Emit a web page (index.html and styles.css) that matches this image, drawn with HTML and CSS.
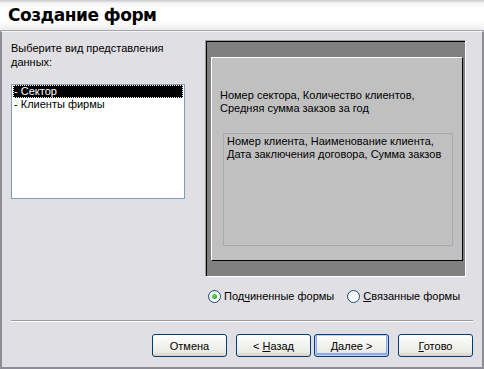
FILE: index.html
```html
<!DOCTYPE html>
<html lang="ru">
<head>
  <meta charset="UTF-8">
  <title>Создание форм</title>
  <link rel="stylesheet" href="styles.css">
</head>
<body>

  <div class="okno">
    <!-- Заголовок мастера -->
    <div class="shapka">
      <h1>Создание форм</h1>
    </div>

    <div class="telo">
      <div class="osnova">
        <!-- Левая колонка: выбор вида -->
        <div class="levo">
          <div class="podpis">Выберите вид представления данных:</div>
          <div class="spisok">
            <div class="punkt vybran">- Сектор</div>
            <div class="punkt">- Клиенты фирмы</div>
          </div>
        </div>

        <!-- Правая колонка: образец формы -->
        <div class="pravo">
          <div class="ramka">
            <div class="obrazec">
              <div class="glavnaya">Номер сектора, Количество клиентов,<br>Средняя сумма закзов за год</div>
              <div class="podforma">Номер клиента, Наименование клиента,<br>Дата заключения договора, Сумма закзов</div>
            </div>
          </div>

          <div class="vybor">
            <label class="radio"><span class="krug otmechen"></span><span>Под<u>ч</u>иненные формы</span></label>
            <label class="radio"><span class="krug"></span><span><u>С</u>вязанные формы</span></label>
          </div>
        </div>
      </div>

      <div class="liniya"></div>

      <div class="knopki">
        <button class="knopka">Отмена</button>
        <div class="para">
          <button class="knopka">&lt; <u>Н</u>азад</button>
          <button class="knopka glavnaya-knopka"><u>Д</u>алее &gt;</button>
        </div>
        <button class="knopka"><u>Г</u>отово</button>
      </div>
    </div>
  </div>

</body>
</html>
```

FILE: styles.css
```css
body {
  margin: 0;
  background-color: #e0dfe3;
}

.okno {
  width: 484px;
  height: 369px;
  display: flex;
  flex-direction: column;
  font-family: 'Liberation Sans', Arial, sans-serif;
  font-size: 11px;
  color: #000;
  background-color: #e0dfe3;
}

.shapka {
  height: 31px;
  box-sizing: border-box;
  padding-left: 8px;
  background: linear-gradient(to bottom, #c8c8cc 0, #f4f4f6 3px, #fff 8px, #fff 22px, #ececee 100%);
  border-bottom: 1px solid #a3a2a8;
  display: flex;
  align-items: center;
}

.shapka h1 {
  margin: 0;
  font-family: 'DejaVu Sans', Verdana, sans-serif;
  font-size: 17px;
  font-weight: bold;
  letter-spacing: -0.5px;
}

.telo {
  flex: 1;
  border-top: 1px solid #f4f4f6;
  border-left: 2px solid #8e8d96;
  border-right: 2px solid #8e8d96;
  border-bottom: 2px solid #8e8d96;
  padding: 8px 9px 0 9px;
  display: flex;
  flex-direction: column;
}

.osnova {
  display: flex;
  gap: 20px;
}

.levo {
  width: 174px;
}

.podpis {
  margin-top: 1px;
  line-height: 14px;
}

.spisok {
  margin-top: 15px;
  height: 115px;
  box-sizing: border-box;
  border: 1px solid #7f9db9;
  background-color: #fff;
  padding: 0 1px;
}

.punkt {
  height: 13px;
  line-height: 13px;
  padding-left: 1px;
  white-space: nowrap;
}

.punkt.vybran {
  background-color: #000;
  color: #fff;
  outline: 1px dotted #fff;
  outline-offset: -1px;
}

.ramka {
  width: 261px;
  height: 237px;
  box-sizing: border-box;
  border-style: solid;
  border-width: 1px;
  border-color: #a0a0a0 #fff #fff #a0a0a0;
  background-color: #808080;
  box-shadow: inset 1px 1px 0 #000;
  padding: 16px 2px 15px 5px;
}

.obrazec {
  height: 204px;
  box-sizing: border-box;
  border-style: solid;
  border-width: 1px;
  border-color: #fff #000 #000 #fff;
  background-color: #c0c0c0;
  padding: 31px 0 0 8px;
}

.glavnaya {
  line-height: 13px;
}

.podforma {
  margin: 18px 0 0 3px;
  width: 230px;
  height: 113px;
  box-sizing: border-box;
  border: 1px solid #a3acb3;
  padding: 1px 3px;
  line-height: 13px;
}

.vybor {
  display: flex;
  gap: 13px;
  margin: 13px 0 0 3px;
}

.radio {
  display: flex;
  align-items: center;
  gap: 3px;
  line-height: 13px;
}

.krug {
  width: 13px;
  height: 13px;
  box-sizing: border-box;
  border: 1px solid #1c5180;
  border-radius: 50%;
  background: radial-gradient(circle at 60% 60%, #fff 30%, #dcdcd6 100%);
  position: relative;
}

.krug.otmechen::after {
  content: "";
  position: absolute;
  left: 3px;
  top: 3px;
  width: 5px;
  height: 5px;
  border-radius: 50%;
  background: radial-gradient(circle at 35% 35%, #5ee05e, #1e9e1e);
}

.liniya {
  margin-top: 17px;
  height: 1px;
  background-color: #9d9da1;
  border-bottom: 1px solid #fff;
}

.knopki {
  display: flex;
  justify-content: flex-end;
  gap: 9px;
  margin-top: 12px;
}

.para {
  display: flex;
  gap: 3px;
}

.knopka {
  width: 75px;
  height: 23px;
  padding: 0;
  font-family: 'Liberation Sans', Arial, sans-serif;
  font-size: 11px;
  color: #000;
  border: 1px solid #003c74;
  border-radius: 3px;
  background: linear-gradient(to bottom, #fff 0, #f4f4f0 40%, #ecebe6 80%, #d6d0c5 100%);
}

.glavnaya-knopka {
  box-shadow: inset 0 0 0 1px #c1d3fb, inset 0 -1px 0 2px #8fa9e8;
}

u {
  text-decoration: underline;
  text-underline-offset: 1px;
}
```
